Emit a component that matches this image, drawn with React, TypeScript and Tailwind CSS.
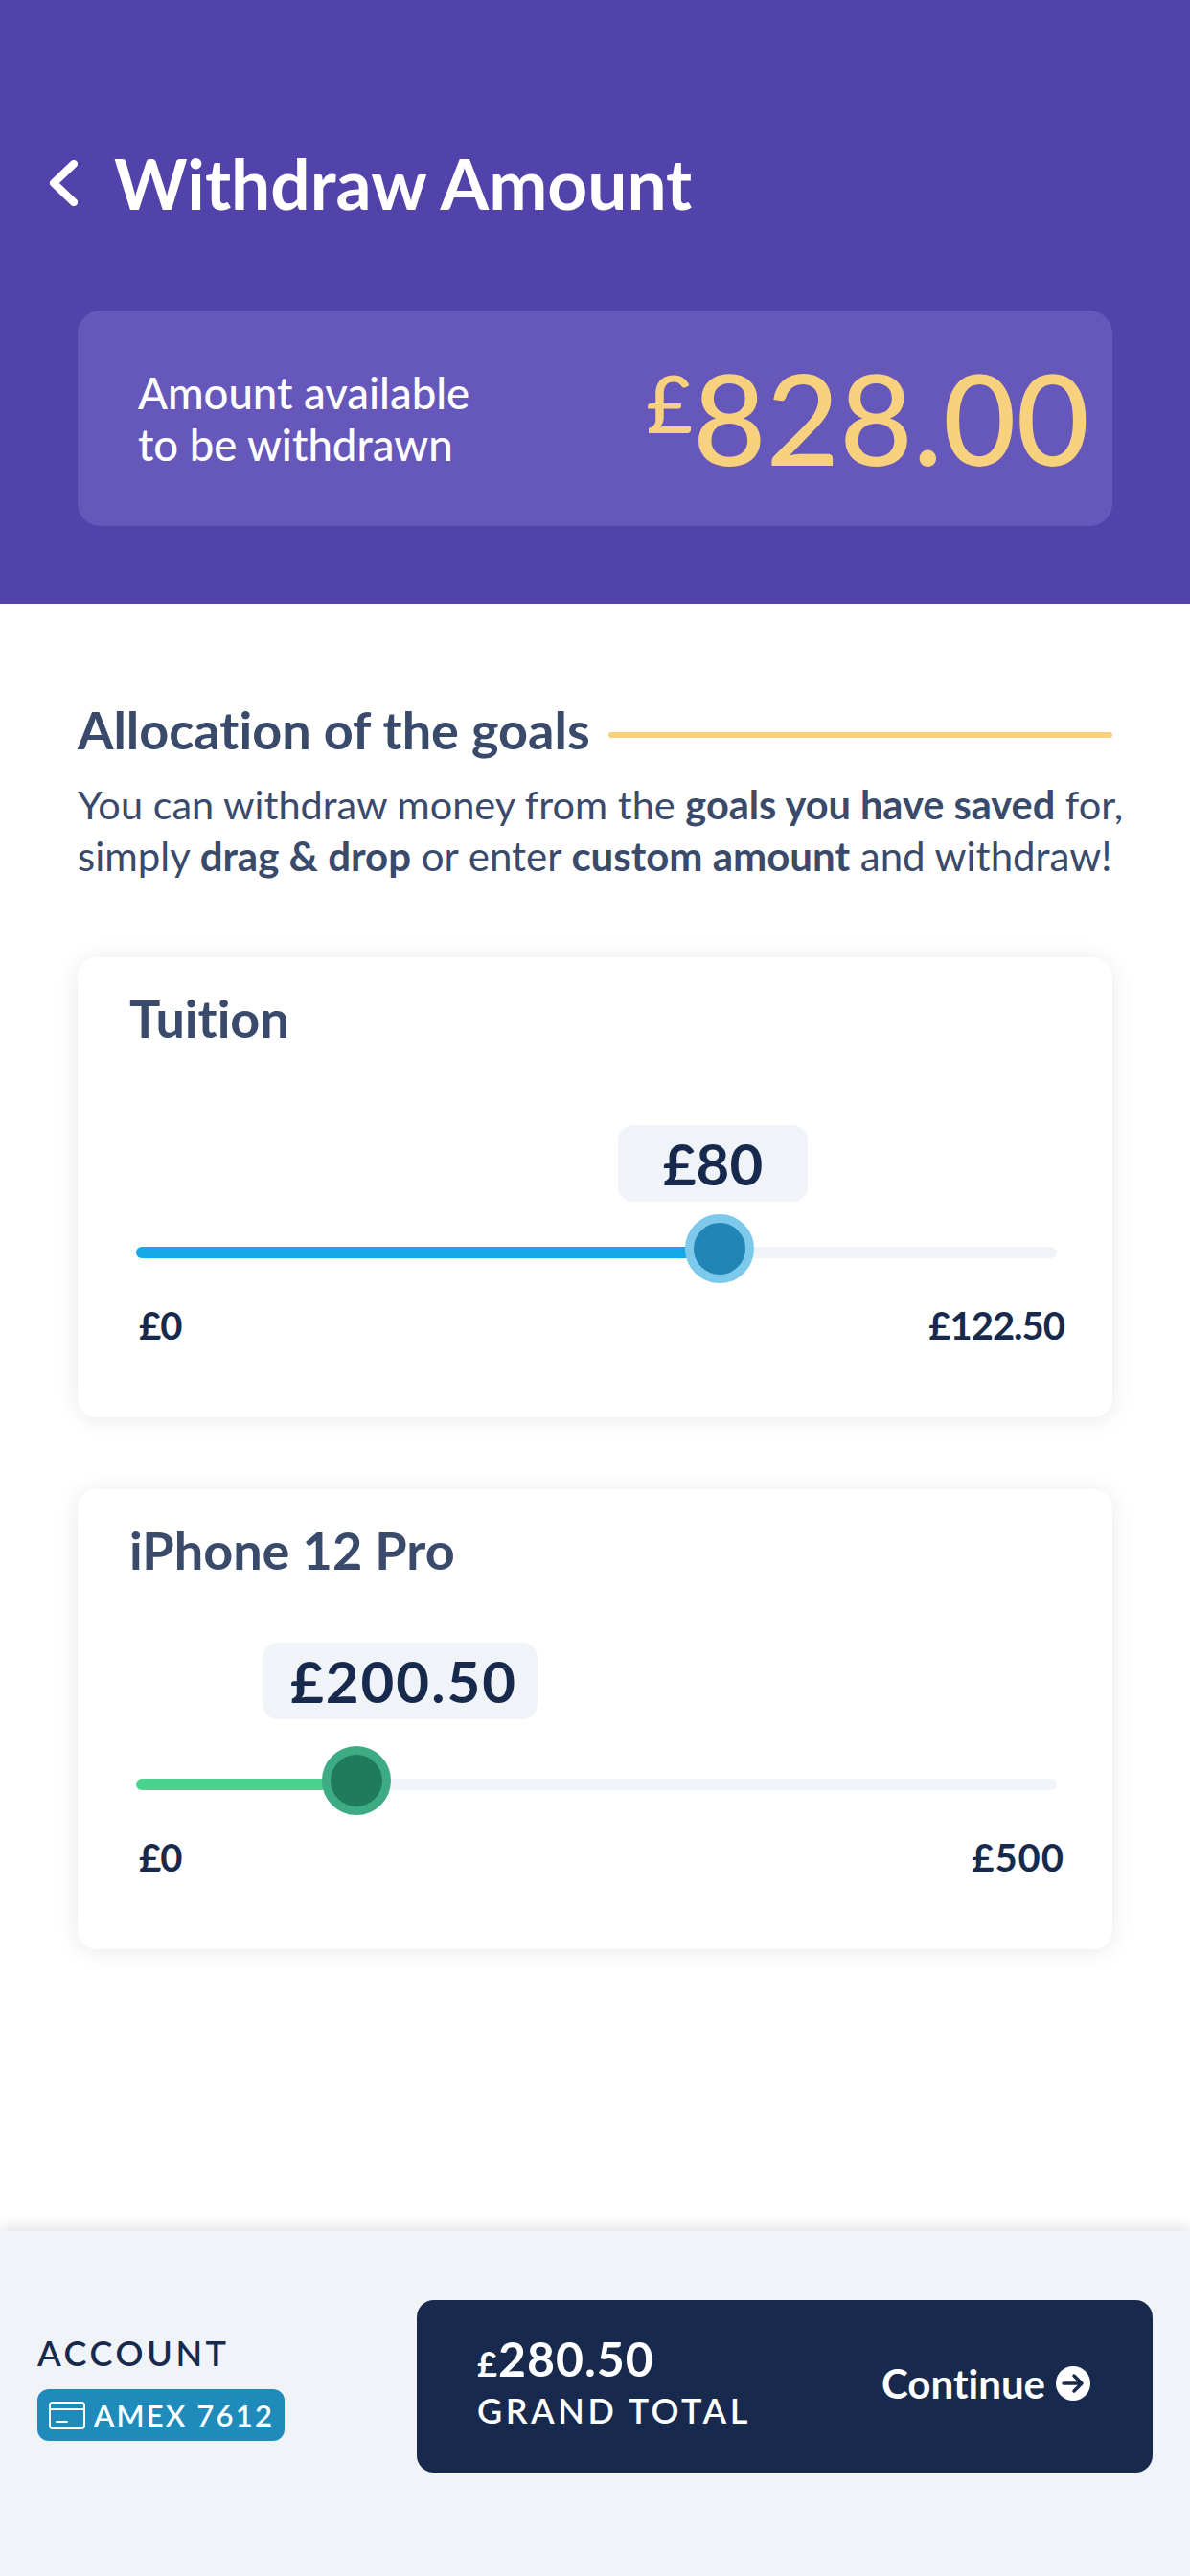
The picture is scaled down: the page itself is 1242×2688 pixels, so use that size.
const font = { fontFamily: '"Lato", "Noto Sans", sans-serif', fontVariantLigatures: 'none' as const };

const CardIcon = () => (
  <svg width="38" height="29" viewBox="0 0 38 29" fill="none" stroke="white" strokeWidth="2">
    <rect x="1" y="1" width="36" height="27" rx="3" />
    <path d="M1 8h36" />
    <path d="M8 21h11" strokeLinecap="round" />
  </svg>
);

const GoalCard = ({
  title,
  amount,
  max,
  maxClass,
  pillClass,
  fillClass,
  thumbClass,
  trackClass,
  pillRowClass,
}: {
  title: string;
  amount: string;
  max: string;
  maxClass: string;
  pillClass: string;
  fillClass: string;
  thumbClass: string;
  trackClass: string;
  pillRowClass: string;
}) => (
  <div className="h-[480px] rounded-[20px] bg-white pl-[54px] pr-[50px] pt-[29px] shadow-[0_2px_24px_rgba(0,0,0,0.09)]">
    <div className="text-[54px] leading-[70px] font-bold text-[#3a4a6b]">{title}</div>
    <div className={pillRowClass}>
      <div className={`flex h-[80px] items-center justify-center rounded-[16px] bg-[#f0f4f8] text-[60px] font-bold text-[#172a4d] ${pillClass}`}>
        {amount}
      </div>
    </div>
    <div className={`relative ml-[7px] h-[12px] w-[961px] rounded-full bg-[#f0f3f8] ${trackClass}`}>
      <div className={`h-full rounded-full ${fillClass}`} />
      <div className={`absolute top-[-34px] h-[72px] w-[72px] rounded-full border-[9px] ${thumbClass}`} />
    </div>
    <div className="ml-[10px] mt-[45px] flex justify-between text-[40px] leading-[50px] font-bold text-[#172a4d]">
      <span className="tracking-[-1px]">£0</span>
      <span className={maxClass}>{max}</span>
    </div>
  </div>
);

export default function App() {
  return (
    <div style={font} className="flex h-[2688px] w-[1242px] flex-col overflow-hidden bg-white">
      <header className="h-[630px] bg-[#5143a9] px-[51px] pt-[151px]">
        <div className="flex h-[80px] items-center gap-[38px]">
          <svg width="30" height="48" viewBox="0 0 30 48" fill="none" stroke="white" strokeWidth="8" strokeLinecap="round" strokeLinejoin="round">
            <path d="M26 4 5 24l21 20" />
          </svg>
          <h1 className="text-[73px] leading-[80px] font-bold text-white">Withdraw Amount</h1>
        </div>
        <div className="ml-[30px] mt-[93px] flex h-[225px] w-[1080px] items-center justify-between rounded-[24px] bg-[#6658ba] pl-[63px] pr-[24px]">
          <p className="text-[45.5px] leading-[54px] font-medium text-white">
            Amount available
            <br />
            to be withdrawn
          </p>
          <div className="flex items-start text-[#f8d17f]">
            <span className="mt-[-2px] text-[84px] leading-[100px] font-medium">£</span>
            <span className="mt-[-4px] text-[132px] leading-[134px] font-medium">828.00</span>
          </div>
        </div>
      </header>

      <main className="flex-1 px-[81px] pt-[97px]">
        <div className="flex items-center gap-[19px]">
          <h2 className="text-[54px] leading-[70px] font-bold whitespace-nowrap text-[#3a4a6b]">Allocation of the goals</h2>
          <div className="mt-[10px] h-[6px] w-[534px] rounded-full bg-[#f8d17f]" />
        </div>
        <p className="mt-[15px] w-[1100px] text-[41.5px] leading-[54px] whitespace-nowrap text-[#3a4a6b]">
          You can withdraw money from the <b>goals you have saved</b> for,
          <br />
          <span className="text-[42px]">
            simply <b>drag &amp; drop</b> or enter <b>custom amount</b> and withdraw!
          </span>
        </p>
        <div className="mt-[79px] flex flex-col gap-[75px]">
          <GoalCard
            title="Tuition"
            amount="£80"
            max="£122.50"
            maxClass="tracking-[-1px]"
            pillRowClass="mt-[76px] flex pl-[510px]"
            pillClass="w-[198px]"
            trackClass="mt-[47px]"
            fillClass="w-[610px] bg-[#15a9e9]"
            thumbClass="left-[573px] border-[#7dc9eb] bg-[#2185b6]"
          />
          <GoalCard
            title="iPhone 12 Pro"
            amount="£200.50"
            max="£500"
            maxClass="tracking-[1px]"
            pillRowClass="mt-[61px] flex pl-[139px]"
            pillClass="w-[287px] pl-[8px] tracking-[2px]"
            trackClass="mt-[62px]"
            fillClass="w-[200px] bg-[#4bd28f]"
            thumbClass="left-[194px] border-[#3dab84] bg-[#207a5c]"
          />
        </div>
      </main>

      <footer className="flex h-[360px] items-start justify-between bg-[#f0f3f8] pl-[39px] pr-[39px] pt-[72px] shadow-[0_-4px_14px_rgba(0,0,0,0.12)]">
        <div className="pt-[32px]">
          <div className="text-[36px] leading-[46px] font-semibold tracking-[3.6px] text-[#172a4d]">ACCOUNT</div>
          <div className="mt-[15px] flex h-[54px] w-[258px] items-center gap-[9px] rounded-[12px] bg-[#1f8bbb] pl-[12px] text-[31px] font-semibold tracking-[2.2px] text-white">
            <CardIcon />
            AMEX 7612
          </div>
        </div>
        <button className="flex h-[180px] w-[768px] items-center justify-between rounded-[18px] bg-[#172a4d] pl-[63px] pr-[65px] text-left text-white">
          <span className="block pb-[8px]">
            <span className="block text-[50px] leading-[52px] font-bold tracking-[1px]">
              <span className="text-[36px]">£</span>280.50
            </span>
            <span className="block text-[36px] leading-[46px] font-semibold tracking-[3.5px]">GRAND TOTAL</span>
          </span>
          <span className="flex items-center gap-[11px] pb-[6px] text-[42px] font-bold">
            Continue
            <svg width="36" height="36" viewBox="0 0 36 36">
              <circle cx="18" cy="18" r="18" fill="white" />
              <path d="M8 18h19M19 10l8 8-8 8" fill="none" stroke="#172a4d" strokeWidth="3.5" strokeLinecap="round" strokeLinejoin="round" />
            </svg>
          </span>
        </button>
      </footer>
    </div>
  );
}
